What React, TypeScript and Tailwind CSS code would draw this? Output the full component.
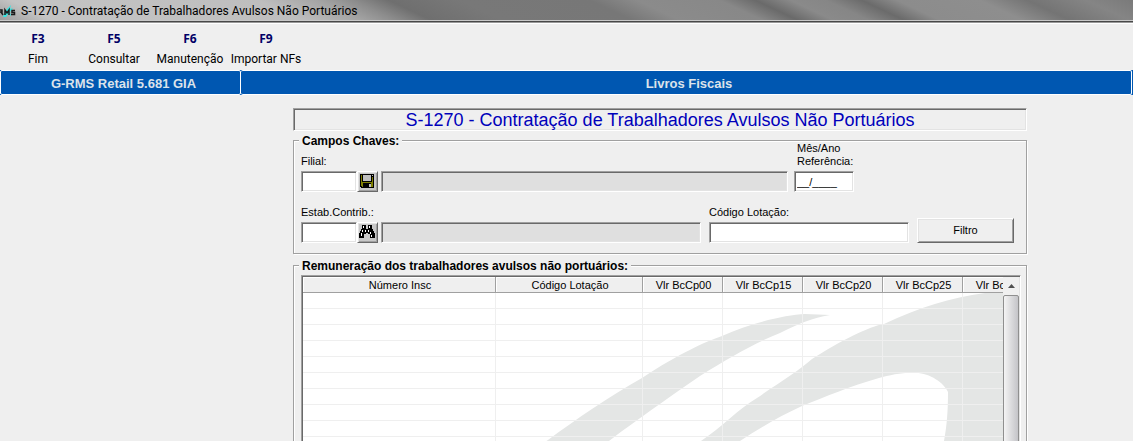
import { useState } from 'react';

const shortcuts = [
  { key: 'F3', label: 'Fim' },
  { key: 'F5', label: 'Consultar' },
  { key: 'F6', label: 'Manutenção' },
  { key: 'F9', label: 'Importar NFs' },
];

const columns = [
  { label: 'Número Insc', width: 'w-[193px]' },
  { label: 'Código Lotação', width: 'w-[147px]' },
  { label: 'Vlr BcCp00', width: 'w-20' },
  { label: 'Vlr BcCp15', width: 'w-20' },
  { label: 'Vlr BcCp20', width: 'w-20' },
  { label: 'Vlr BcCp25', width: 'w-20' },
  { label: 'Vlr BcCp30', width: 'w-20' },
];

const rows = Array.from({ length: 12 }, (_, i) => i);

const sunken =
  'border border-t-[#a0a0a0] border-l-[#a0a0a0] border-b-white border-r-white inset-shadow-[1px_1px_0_#696969,-1px_-1px_0_#e3e3e3]';
const raised =
  'border border-t-white border-l-white border-b-[#696969] border-r-[#696969] inset-shadow-[1px_1px_0_#e3e3e3,-1px_-1px_0_#a0a0a0]';
const panel = 'border border-[#a0a0a0] shadow-[1px_1px_0_#fff] inset-shadow-[1px_1px_0_#fff]';
const legend = 'ml-[5px] bg-[#efefef] px-[3px] text-[12px] leading-4 font-bold';
const iconButton = 'flex h-[21px] w-[21px] items-start bg-[#c8c8c8] pt-px pl-px';

const LogoIcon = () => (
  <svg className="h-4 w-4 shrink-0" viewBox="0 0 16 16" aria-hidden="true">
    <path d="M3 14L5 8L11 2L10 6L13 5L10 9L11 13L8 11L6 14Z" fill="#35e6e2" />
    <path
      d="M0 7H2V9H0M1 9L3 12M5 12V7L7 10L9 7V12M15 7.500H12V9.500H14.500V11.500H11"
      fill="none"
      stroke="#1a1a1a"
      strokeWidth="1.500"
    />
  </svg>
);

const DiskIcon = () => (
  <svg className="h-4 w-4" viewBox="0 0 16 16" shapeRendering="crispEdges" aria-hidden="true">
    <path d="M1 1H15V15H2L1 14Z" fill="#000" />
    <path d="M2 2H3V9H13V4H14V14H12V10H4V14H3L2 13Z" fill="#808000" />
    <path d="M4 2H12V8H4Z" fill="#c0c0c0" />
    <path d="M13 2H14V3H13Z" fill="#c0c0c0" />
    <path d="M10 11H12V14H10Z" fill="#c0c0c0" />
  </svg>
);

const BinocularsIcon = () => (
  <svg className="h-4 w-4" viewBox="0 0 16 16" shapeRendering="crispEdges" aria-hidden="true">
    <path
      d="M3 1H7V5H9V1H13V5H14V7H15V9H16V14H11V10H9V9H7V10H5V14H0V9H1V7H2V5H3Z"
      fill="#000"
    />
    <path
      d="M4 2H5V4H4ZM10 2H11V4H10ZM3 6H4V8H3ZM6 6H7V8H6ZM9 6H10V8H9ZM2 9H3V12H2ZM11 8H12V10H11ZM12 11H13V13H12Z"
      fill="#fff"
    />
  </svg>
);

const Watermark = () => (
  <svg className="h-[192px] w-[701px]" viewBox="303 293 701 192" aria-hidden="true">
    <path
      d="M500 485C520 462 535 448 548 440C575 420 610 396 642 378C680 353 705 342 722 336C750 323 785 315 805 314L830 315C812 318 800 323 780 333C755 343 730 357 700 376C665 400 630 425 609 441L560 485Z"
      fill="#e4e6e5"
    />
    <path
      d="M650 485L701 441C722 427 738 409 757 398C780 382 800 370 812 359C840 341 870 326 884 324C920 307 950 298 985 293H1004V485H930C940 465 942 450 944 441C947 425 948 410 948 392C944 383 930 373 916 373C905 372 890 375 879 378C850 386 825 397 802 406C780 416 760 428 740 441L680 485Z"
      fill="#e4e6e5"
    />
  </svg>
);

export default function App() {
  const [filial, setFilial] = useState('');
  const [estab, setEstab] = useState('');
  const [lotacao, setLotacao] = useState('');
  const [mesAno, setMesAno] = useState('__/____');

  return (
    <div className="flex h-screen flex-col overflow-hidden bg-[#efefef] font-['Liberation_Sans',Arial,sans-serif] text-[11px] leading-[13px] text-black">
      <header className="flex h-6 shrink-0 items-center gap-[5px] border-b border-white bg-[linear-gradient(25deg,#989898_0%,#c4c4c4_5%,#bebebe_26%,#a4a4a4_31%,#8c8c8c_34%,#6f6f6f_37%,#787878_43%,#777_54%,#8b8b8b_58%,#888_65%,#6a6a6a_68%,#8a8a8a_71%,#868686_74%,#6b6b6b_77%,#8c8c8c_80%,#8e8e8e_87%,#747474_91%,#858585_96%,#7a7a7a_100%)] pb-[2px] inset-shadow-[0_-1px_0_#999,0_-2px_0_#484848,0_-3px_0_#c8c8c8]">
        <LogoIcon />
        <h1 className="font-[Roboto,sans-serif] text-[12px] leading-5 whitespace-nowrap">
          S-1270 - Contratação de Trabalhadores Avulsos Não Portuários
        </h1>
      </header>

      <nav className="flex h-[46px] shrink-0 font-[Roboto,sans-serif] text-[12px] leading-5">
        {shortcuts.map((item) => (
          <button key={item.key} type="button" className="flex w-[76px] flex-col items-center pt-[5px] whitespace-nowrap">
            <span className="font-['Open_Sans',sans-serif] font-bold text-[#000066]">{item.key}</span>
            <span>{item.label}</span>
          </button>
        ))}
      </nav>

      <div className="flex h-[25px] shrink-0 bg-[#0057b1] text-center text-[13px] leading-[23px] font-bold text-[#dce3ea]">
        <div className="w-[241px] rounded-[2px] border border-white pt-px pl-[6px]">G-RMS Retail 5.681 GIA</div>
        <div className="mr-px flex-1 rounded-[2px] border border-l-0 border-white pt-px pl-[6px]">Livros Fiscais</div>
      </div>

      <main className="flex flex-col pt-[13px] pr-[106px] pl-[293px]">
        <h2 className={`${sunken} h-[23px] text-center text-[18px] leading-[23px] whitespace-nowrap text-[#0000bb]`}>
          S-1270 - Contratação de Trabalhadores Avulsos Não Portuários
        </h2>

        <section className={`${panel} mt-[9px] h-[114px]`}>
          <h3 className="-mt-2 flex h-[9px]">
            <span className={legend}>Campos Chaves:</span>
          </h3>
          <div className="flex items-end pl-[7px]">
            <div className="flex w-14 flex-col gap-[3px]">
              <label htmlFor="filial">Filial:</label>
              <input id="filial" value={filial} onChange={(e) => setFilial(e.target.value)} className={`${sunken} h-[21px] bg-white px-1`} />
            </div>
            <button type="button" aria-label="Salvar" className={`${raised} ${iconButton}`}>
              <DiskIcon />
            </button>
            <input aria-label="Nome da filial" readOnly className={`${sunken} ml-[3px] h-[21px] min-w-0 flex-1 bg-[#dfdfdf] px-1`} />
            <div className="mr-[172px] ml-[6px] flex w-[60px] flex-col gap-[3px]">
              <label htmlFor="mesAno" className="pl-[3px]">
                Mês/Ano
                <br />
                Referência:
              </label>
              <input id="mesAno" value={mesAno} onChange={(e) => setMesAno(e.target.value)} className={`${sunken} h-[21px] bg-white px-[2px]`} />
            </div>
          </div>
          <div className="mt-[14px] flex items-end pr-3 pl-[7px]">
            <div className="flex w-14 flex-col gap-[3px] whitespace-nowrap">
              <label htmlFor="estab">Estab.Contrib.:</label>
              <input id="estab" value={estab} onChange={(e) => setEstab(e.target.value)} className={`${sunken} h-[21px] bg-white px-1`} />
            </div>
            <button type="button" aria-label="Pesquisar" className={`${raised} ${iconButton}`}>
              <BinocularsIcon />
            </button>
            <input aria-label="Nome do estabelecimento" readOnly className={`${sunken} ml-[3px] h-[21px] min-w-0 flex-1 bg-[#dfdfdf] px-1`} />
            <div className="ml-2 flex w-[200px] flex-col gap-[3px]">
              <label htmlFor="lotacao">Código Lotação:</label>
              <input id="lotacao" value={lotacao} onChange={(e) => setLotacao(e.target.value)} className={`${sunken} h-[21px] bg-white px-1`} />
            </div>
            <button type="button" className={`${raised} ml-2 h-[25px] w-[97px] bg-[#efefef]`}>
              Filtro
            </button>
          </div>
        </section>

        <section className={`${panel} mt-[11px]`}>
          <h3 className="-mt-2 flex">
            <span className={legend}>Remuneração dos trabalhadores avulsos não portuários:</span>
          </h3>
          <div className={`${sunken} mt-px mr-[5px] ml-[7px] flex bg-white p-px`}>
            <div className="relative min-w-0 flex-1 overflow-hidden">
              <div className="absolute inset-x-0 top-4 bottom-0 overflow-hidden">
                <Watermark />
              </div>
              <table className="relative w-[740px] table-fixed border-separate border-spacing-0">
                <thead>
                  <tr className="h-4">
                    {columns.map((col) => (
                      <th key={col.label} className={`${col.width} border-r border-b border-[#a0a0a0] bg-[#efefef] p-0 pt-[2px] pl-[2px] font-normal inset-shadow-[1px_1px_0_#fff]`}>
                        {col.label}
                      </th>
                    ))}
                  </tr>
                </thead>
                <tbody>
                  {rows.map((row) => (
                    <tr key={row} className="h-4">
                      {columns.map((col) => (
                        <td key={col.label} className="border-r border-b border-[#efefef] p-0" />
                      ))}
                    </tr>
                  ))}
                </tbody>
              </table>
            </div>
            <div className="flex w-4 flex-col bg-[#f0f0f0]">
              <button type="button" aria-label="Rolar para cima" className="flex h-[18px] items-center justify-center">
                <svg className="h-1 w-[7px]" viewBox="0 0 7 4" aria-hidden="true">
                  <path d="M0 4L3.500 0L7 4Z" fill="#505050" />
                </svg>
              </button>
              <div className="flex-1 rounded-t-[2px] border border-[#8f8f8f] bg-linear-to-r from-[#f4f4f4] to-[#c4c4c8]" />
            </div>
          </div>
        </section>
      </main>
    </div>
  );
}
